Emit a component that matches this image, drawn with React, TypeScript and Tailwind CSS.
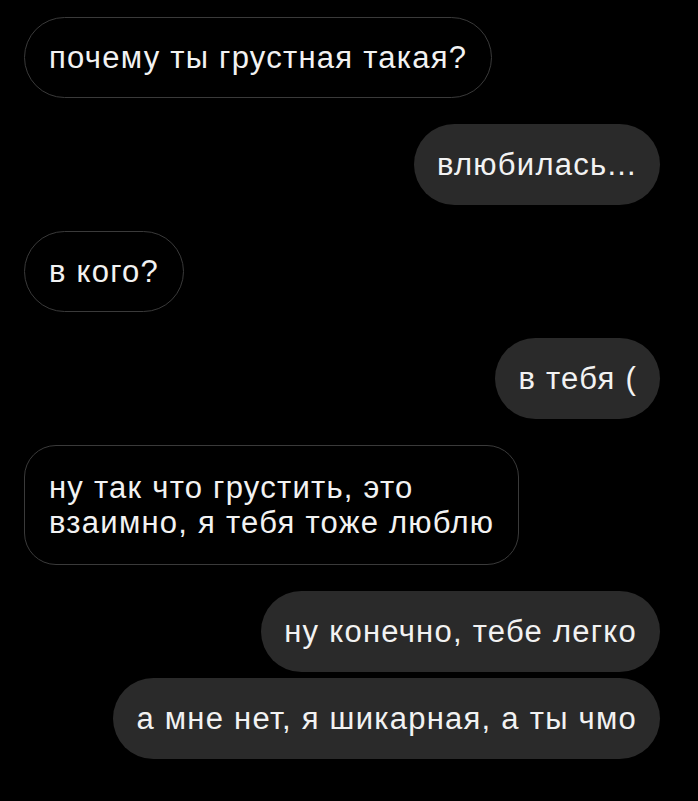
import React from "react"

type Msg = {
  id: number
  mine: boolean
  lines: string[]
}

// Thread as it reads top to bottom. "mine" bubbles sit on the right, filled.
const MESSAGES: Msg[] = [
  { id: 1, mine: false, lines: ["почему ты грустная такая?"] },
  { id: 2, mine: true, lines: ["влюбилась..."] },
  { id: 3, mine: false, lines: ["в кого?"] },
  { id: 4, mine: true, lines: ["в тебя ("] },
  {
    id: 5,
    mine: false,
    lines: ["ну так что грустить, это", "взаимно, я тебя тоже люблю"],
  },
  { id: 6, mine: true, lines: ["ну конечно, тебе легко"] },
  { id: 7, mine: true, lines: ["а мне нет, я шикарная, а ты чмо"] },
]

function Bubble({ msg }: { msg: Msg }) {
  const multi = msg.lines.length > 1
  return (
    <div
      className={
        msg.mine
          ? "flex h-[81px] items-center rounded-full bg-[#2a2a2a] px-[23px] text-[31px] leading-[35px] tracking-[1.25px] text-[#f2f2f2]"
          : multi
            ? "rounded-[32px] border-[1.5px] border-[#3a3a3a] px-[24px] py-[24px] text-[31px] leading-[35px] tracking-[1.25px] text-[#f2f2f2]"
            : "flex h-[81px] items-center rounded-full border-[1.5px] border-[#3a3a3a] px-[24px] text-[31px] leading-[35px] tracking-[1.25px] text-[#f2f2f2]"
      }
    >
      <div>
        {msg.lines.map((l) => (
          <div key={l} className="whitespace-nowrap">
            {l}
          </div>
        ))}
      </div>
    </div>
  )
}

export default function App() {
  return (
    <div
      className="min-h-screen w-full bg-black pt-[17px] pr-[38px] pl-[24px]"
      style={{ fontFamily: '"Liberation Sans", Arial, sans-serif' }}
    >
      <div className="flex flex-col">
        {MESSAGES.map((m, i) => {
          const prev = MESSAGES[i - 1]
          // consecutive bubbles from the same side sit tight together
          const gap = !prev ? "" : prev.mine === m.mine ? "mt-[6px]" : "mt-[26px]"
          return (
            <div
              key={m.id}
              className={`flex ${m.mine ? "justify-end" : "justify-start"} ${gap}`}
            >
              <Bubble msg={m} />
            </div>
          )
        })}
      </div>
    </div>
  )
}
